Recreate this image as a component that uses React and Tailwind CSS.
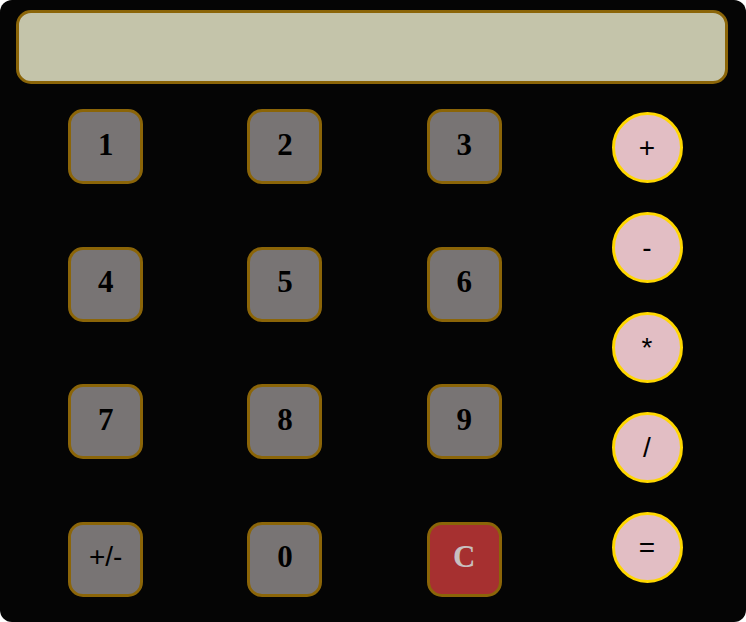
export default function App() {
  const nums = ["1", "2", "3", "4", "5", "6", "7", "8", "9", "+/-", "0", "C"];
  const ops = ["+", "-", "*", "/", "="];
  return (
    <div className="w-[746px] h-[622px] bg-white">
      <div className="w-[746px] h-[622px] bg-[#050505] rounded-[12px] overflow-hidden flex flex-col">
        <div className="shrink-0 mt-[10px] ml-[16px] w-[712px] h-[74px] bg-[#c4c4aa] border-[3px] border-[#8b6508] rounded-[15px]" />
        <div className="shrink-0 flex mt-[-6px]">
          <div className="ml-[16px] w-[538px] grid grid-cols-3 grid-rows-[repeat(4,137.5px)]">
            {nums.map((n) => (
              <div key={n} className="flex items-center justify-center">
                <div
                  className={
                    "w-[75px] h-[75px] rounded-[15px] border-[3px] border-[#8b6508] flex items-center justify-center pb-[4px] " +
                    (n === "C"
                      ? "bg-[#a63030] text-[#c8c0c0] font-bold text-[31px] font-['Liberation_Serif',serif]"
                      : n === "+/-"
                      ? "bg-[#787474] text-black text-[28px] font-['Liberation_Sans',sans-serif]"
                      : "bg-[#787474] text-black font-bold text-[31px] font-['Liberation_Serif',serif]")
                  }
                >
                  {n}
                </div>
              </div>
            ))}
          </div>
          <div className="w-[186px] flex flex-col items-center pt-[34px] gap-[29px]">
            {ops.map((o) => (
              <div
                key={o}
                className="w-[71px] h-[71px] rounded-full bg-[#e2bec4] border-[3px] border-[#ffd700] flex items-center justify-center text-[28px] text-black font-['Liberation_Sans',sans-serif]"
              >
                {o}
              </div>
            ))}
          </div>
        </div>
      </div>
    </div>
  );
}
